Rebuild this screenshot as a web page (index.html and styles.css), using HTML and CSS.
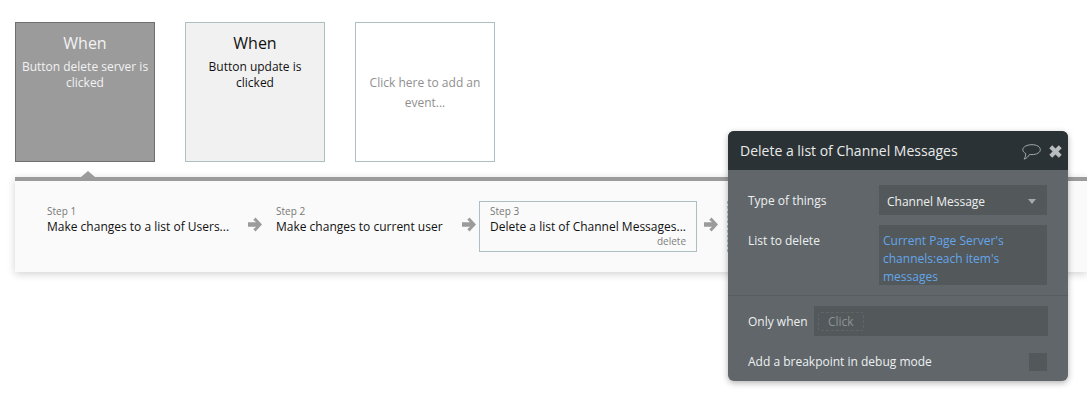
FILE: index.html
```html
<!DOCTYPE html>
<html lang="en">
<head>
<meta charset="utf-8">
<title>Workflow editor</title>
<link rel="stylesheet" href="styles.css">
</head>
<body>
<main class="editor">
  <section class="events">
    <div class="event event-active"><div class="event-title">When</div><div class="event-desc">Button delete server is clicked</div></div>
    <div class="event event-idle"><div class="event-title">When</div><div class="event-desc">Button update is clicked</div></div>
    <div class="event event-add">Click here to add an event...</div>
  </section>
  <section class="workflow">
    <span class="caret"></span>
    <div class="step step-1"><div class="step-num">Step 1</div><div class="step-name">Make changes to a list of Users...</div></div>
    <svg class="arrow" viewBox="0 0 14 15"><path d="M7.5 .5 L14 7.5 L7.5 14.5 L5.3 12.3 L8 9.7 H0 V5.3 H8 L5.3 2.7 Z"/></svg>
    <div class="step step-2"><div class="step-num">Step 2</div><div class="step-name">Make changes to current user</div></div>
    <svg class="arrow" viewBox="0 0 14 15"><path d="M7.5 .5 L14 7.5 L7.5 14.5 L5.3 12.3 L8 9.7 H0 V5.3 H8 L5.3 2.7 Z"/></svg>
    <div class="step step-3"><div class="step-num">Step 3</div><div class="step-name">Delete a list of Channel Messages...</div><div class="step-tag">delete</div></div>
    <svg class="arrow" viewBox="0 0 14 15"><path d="M7.5 .5 L14 7.5 L7.5 14.5 L5.3 12.3 L8 9.7 H0 V5.3 H8 L5.3 2.7 Z"/></svg>
    <div class="step-new"></div>
  </section>
</main>
<aside class="panel">
  <header class="panel-head">
    <span class="panel-title">Delete a list of Channel Messages</span>
    <svg class="icon-comment" viewBox="0 0 19 16"><path d="M10 .7 C14.6 .7 18.3 2.7 18.3 5.7 C18.3 8.6 14.6 10.6 10 10.6 C9.2 10.6 8.4 10.6 7.6 10.4 C6.3 12.6 4.4 14.6 2 15.1 C3.3 13.6 3.8 11.2 3.7 9.5 C1.9 8.5 .8 7.2 .8 5.7 C.8 2.7 5.4 .7 10 .7 Z"/></svg>
    <svg class="icon-close" viewBox="0 0 13 13"><path d="M3.2 .3 L6.5 3.6 L9.8 .3 L12.7 3.2 L9.4 6.5 L12.7 9.8 L9.8 12.7 L6.5 9.4 L3.2 12.7 L.3 9.8 L3.6 6.5 L.3 3.2 Z"/></svg>
  </header>
  <div class="panel-fields">
    <div class="field">
      <label class="field-label">Type of things</label>
      <div class="select"><span>Channel Message</span><span class="select-caret"></span></div>
    </div>
    <div class="field field-list">
      <label class="field-label">List to delete</label>
      <div class="expr">Current Page Server's channels:each item's messages</div>
    </div>
  </div>
  <div class="panel-cond">
    <div class="when">
      <label class="field-label field-label-when">Only when</label>
      <div class="when-input"><span class="click-chip">Click</span></div>
    </div>
    <div class="debug">
      <label class="field-label">Add a breakpoint in debug mode</label>
      <span class="checkbox"></span>
    </div>
  </div>
</aside>
</body>
</html>
```

FILE: styles.css
```css
* { box-sizing: border-box; }
html, body { margin: 0; height: 100%; }
body {
  position: relative;
  width: 1087px;
  height: 401px;
  overflow: hidden;
  background: #fff;
  font-family: "Open Sans", "Noto Sans", sans-serif;
  font-size: 12px;
  color: #1f1f1f;
}
.events { display: flex; gap: 30px; padding: 22px 0 0 15px; }
.event {
  width: 140px;
  height: 140px;
  border: 1px solid #aebfc4;
  text-align: center;
  padding: 9px 3px 0;
}
.event-active { background: #9b9b9b; border-color: #6f6f6f; color: #f2f2f2; }
.event-idle { background: #f1f1f1; color: #111; }
.event-add {
  display: flex;
  align-items: center;
  justify-content: center;
  padding: 1px 12px 0;
  color: #8f8f8f;
  line-height: 20px;
}
.event-title { font-size: 16px; line-height: 22px; margin-bottom: 5px; }
.event-desc { line-height: 16px; }
.workflow {
  position: relative;
  display: flex;
  align-items: flex-start;
  margin: 15px 0 0 15px;
  height: 95px;
  border-top: 4px solid #9b9b9b;
  background: #fafafa;
  box-shadow: 0 2px 8px rgba(0, 0, 0, .18);
  padding: 20px 0 0 32px;
}
.caret {
  position: absolute;
  left: 66px;
  top: -10px;
  border-left: 7px solid transparent;
  border-right: 7px solid transparent;
  border-bottom: 6px solid #9b9b9b;
}
.step { height: 51px; padding-top: 3px; white-space: nowrap; }
.step-1 { width: 201px; }
.step-2 { width: 186px; }
.step-3 {
  width: 218px;
  padding: 2px 10px 0;
  border: 1px solid #aebfc4;
  background: #fafafa;
}
.step-num { font-size: 10px; line-height: 15px; color: #777; }
.step-name { line-height: 16px; color: #111; }
.step-3 .step-num { line-height: 14px; }
.step-3 .step-name { margin-top: 1px; }
.step-tag { font-size: 10px; line-height: 14px; margin-top: -1px; text-align: right; color: #808080; }
.arrow { flex: none; width: 14px; height: 15px; margin-top: 16px; fill: #9b9b9b; }
.step-1 + .arrow { margin-right: 14px; }
.step-2 + .arrow { margin-right: 3px; }
.step-3 + .arrow { margin-left: 7px; }
.step-new { width: 10px; height: 51px; margin-left: 9px; border-left: 1px dashed #aebfc4; }
.panel {
  position: absolute;
  left: 728px;
  top: 131px;
  width: 340px;
  height: 250px;
  background: #60666a;
  border-radius: 6px;
  box-shadow: 0 2px 6px rgba(0, 0, 0, .3);
  color: #eef0f0;
  overflow: hidden;
}
.panel-head {
  display: flex;
  align-items: center;
  height: 39px;
  padding: 0 6px 0 12px;
  background: #2b3235;
}
.panel-title { flex: 1; font-size: 14px; color: #e8eaea; }
.icon-comment { width: 19px; height: 16px; fill: none; stroke: #a5abad; stroke-width: 1; margin-right: 8px; margin-top: 3px; }
.icon-close { width: 13px; height: 13px; fill: #b9bdbf; margin-top: 2px; }
.panel-fields {
  height: 126px;
  padding: 15px 21px 0 20px;
  border-bottom: 1px solid #565c60;
}
.field { display: flex; justify-content: space-between; align-items: flex-start; }
.field-label { font-size: 12px; line-height: 16px; color: #eef0f0; }
.field > .field-label { padding-top: 8px; }
.field-label-when { padding-top: 1px; }
.select {
  display: flex;
  align-items: center;
  justify-content: space-between;
  width: 168px;
  height: 30px;
  padding: 2px 11px 0 8px;
  background: #53585b;
  color: #eef0f0;
}
.select-caret {
  border-left: 4px solid transparent;
  border-right: 4px solid transparent;
  border-top: 5px solid #a5a9ab;
}
.field-list { margin-top: 10px; }
.expr {
  width: 168px;
  height: 60px;
  padding: 7px 4px 0;
  background: #53585b;
  color: #63a6ea;
  line-height: 18px;
}
.panel-cond { padding: 10px 20px 0; }
.when { display: flex; align-items: center; justify-content: space-between; }
.when-input {
  width: 234px;
  height: 30px;
  background: #53585b;
  display: flex;
  align-items: center;
  padding-left: 4px;
}
.click-chip {
  padding: 0 9px;
  line-height: 17px;
  border: 1px dashed #5f6568;
  border-radius: 3px;
  color: #8f9496;
}
.debug { display: flex; align-items: center; justify-content: space-between; margin-top: 17px; padding-right: 1px; }
.checkbox { width: 18px; height: 18px; background: #53585b; }
```
